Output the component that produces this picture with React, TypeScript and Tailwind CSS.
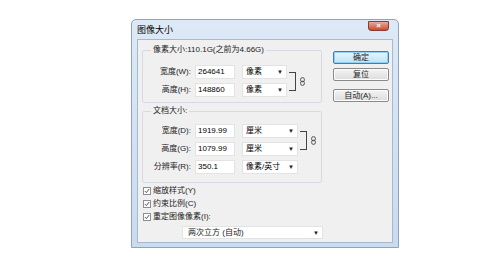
import React from 'react';

const font = { fontFamily: '"Liberation Sans", "Noto Sans CJK SC", sans-serif' };

const Select: React.FC<{ value: string; w: string }> = ({ value, w }) => (
  <div className={`${w} h-[14px] bg-white border border-[#e3e3e3] flex items-center justify-between pl-[3px] pr-[3px]`}>
    <span>{value}</span>
    <span className="text-[6px] text-[#222]">▼</span>
  </div>
);

const Row: React.FC<{ label: string; value: string; unit: string; selW: string }> = ({ label, value, unit, selW }) => (
  <div className="flex items-center h-[14px]">
    <div className="w-[49px] text-right pr-[1px] text-[#222]">{label}</div>
    <div className="ml-[3px] w-[40px] h-[14px] bg-white border border-[#e3e3e3] pl-[2px] flex items-center">{value}</div>
    <div className="ml-[7px]">
      <Select value={unit} w={selW} />
    </div>
  </div>
);

const Chain = () => (
  <svg width="5" height="9" viewBox="0 0 5 9" className="ml-[4px]">
    <rect x="0.6" y="0.6" width="3.8" height="4.2" rx="1.8" fill="none" stroke="#444" strokeWidth="0.9" />
    <rect x="0.6" y="4.2" width="3.8" height="4.2" rx="1.8" fill="none" stroke="#444" strokeWidth="0.9" />
  </svg>
);

const Bracket = () => (
  <div className="flex items-center ml-[2px]">
    <div className="w-[7px] h-[19px] border-t border-r border-b border-[#444]" />
    <Chain />
  </div>
);

const Check: React.FC<{ label: string }> = ({ label }) => (
  <div className="flex items-center h-[13px]">
    <div className="w-[8px] h-[8px] border border-[#8f8f8f] bg-white flex items-center justify-center">
      <svg width="6" height="6" viewBox="0 0 6 6">
        <path d="M0.8 3 L2.4 4.6 L5.2 1" fill="none" stroke="#3a5a8a" strokeWidth="1" />
      </svg>
    </div>
    <span className="ml-[2px] text-[#222]">{label}</span>
  </div>
);

const Btn: React.FC<{ label: string; primary?: boolean; mt: string }> = ({ label, primary, mt }) => (
  <div
    className={`${mt} w-[56px] h-[13px] rounded-[2px] border flex items-center justify-center text-[#222] ${
      primary
        ? 'border-[#3c7fb1] bg-gradient-to-b from-[#e8f5fc] to-[#bfe1f5] shadow-[inset_0_0_0_1px_#8fd2f5]'
        : 'border-[#8a8a8a] bg-gradient-to-b from-[#f4f4f4] to-[#dcdcdc] shadow-[inset_0_0_0_1px_#fcfcfc]'
    }`}
  >
    {label}
  </div>
);

export default function App() {
  return (
    <div className="w-[500px] h-[275px] bg-white overflow-hidden text-[8px] leading-none" style={font}>
      <div className="ml-[131px] mt-[19px] w-[268px] h-[229px] rounded-t-[5px] border border-[#8ea3bd] bg-gradient-to-b from-[#dde9f6] to-[#c9dbef] flex flex-col">
        {/* title bar */}
        <div className="h-[19px] flex items-start justify-between shrink-0">
          <div className="ml-[5px] mt-[6px] text-[9px] text-black">图像大小</div>
          <div className="mr-[9px] w-[21px] h-[10px] mt-[1px] rounded-b-[3px] border border-[#8a3a30] bg-gradient-to-b from-[#e9a99b] to-[#c74a33] flex items-center justify-center text-white text-[8px] font-bold">
            ×
          </div>
        </div>
        {/* body */}
        <div className="mx-[5px] mb-[4px] flex-1 bg-[#f0f0f0] border border-[#a7b9cf] flex">
          <div className="ml-[4px] w-[180px]">
            <fieldset className="mt-[5px] border border-[#d5dbe1] rounded-[2px] pt-[10px] pb-[5px]">
              <legend className="ml-[8px] px-[2px] leading-[10px] text-[#222]">像素大小:110.1G(之前为4.66G)</legend>
              <div className="flex items-center">
                <div className="flex flex-col gap-[4px]">
                  <Row label="宽度(W):" value="264641" unit="像素" selW="w-[45px]" />
                  <Row label="高度(H):" value="148860" unit="像素" selW="w-[45px]" />
                </div>
                <Bracket />
              </div>
            </fieldset>
            <fieldset className="mt-[3px] border border-[#d5dbe1] rounded-[2px] pt-[8px] pb-[8px]">
              <legend className="ml-[8px] px-[2px] leading-[10px] text-[#222]">文档大小:</legend>
              <div className="flex items-start">
                <div className="flex flex-col gap-[4px]">
                  <Row label="宽度(D):" value="1919.99" unit="厘米" selW="w-[56px]" />
                  <Row label="高度(G):" value="1079.99" unit="厘米" selW="w-[56px]" />
                  <Row label="分辨率(R):" value="350.1" unit="像素/英寸" selW="w-[56px]" />
                </div>
                <div className="mt-[7px]">
                  <Bracket />
                </div>
              </div>
            </fieldset>
            <div className="mt-[1px] ml-[1px]">
              <Check label="缩放样式(Y)" />
              <Check label="约束比例(C)" />
              <Check label="重定图像像素(I):" />
            </div>
            <div className="mt-[3px] ml-[40px] w-[141px] h-[13px] bg-white border border-[#e3e3e3] flex items-center justify-between pl-[5px] pr-[3px]">
              <span className="text-[#222]">两次立方 (自动)</span>
              <span className="text-[6px] text-[#222]">▼</span>
            </div>
          </div>
          <div className="ml-[11px] flex flex-col">
            <Btn label="确定" primary mt="mt-[11px]" />
            <Btn label="复位" mt="mt-[4px]" />
            <Btn label="自动(A)..." mt="mt-[8px]" />
          </div>
        </div>
      </div>
    </div>
  );
}
